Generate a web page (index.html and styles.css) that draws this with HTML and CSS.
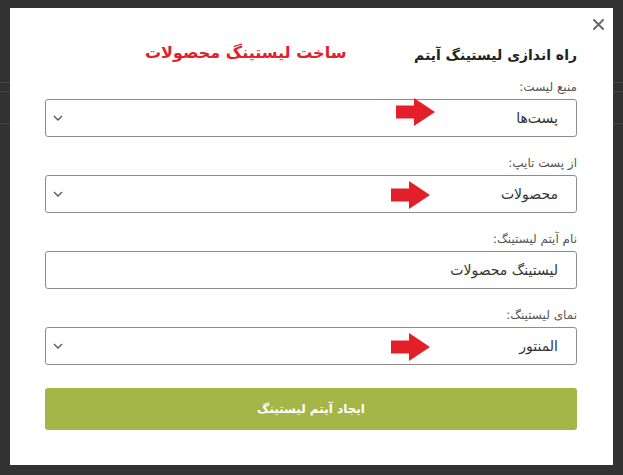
FILE: index.html
```html
<!DOCTYPE html>
<html lang="fa">
<head>
<meta charset="utf-8">
<title>راه اندازی لیستینگ آیتم</title>
<link rel="stylesheet" href="styles.css">
</head>
<body>
<div class="backdrop">
  <div class="modal" dir="rtl">
    <button class="close" aria-label="بستن">
      <svg width="11" height="11" viewBox="0 0 11 11"><path d="M1 1L10 10M10 1L1 10" stroke="#6b6b6b" stroke-width="2" stroke-linecap="round"/></svg>
    </button>
    <h2 class="title">راه اندازی لیستینگ آیتم</h2>
    <div class="note">ساخت لیستینگ محصولات</div>

    <div class="field">
      <label class="label">منبع لیست:</label>
      <div class="control select">
        <span class="value">پست‌ها</span>
        <svg class="chev" width="10" height="6" viewBox="0 0 10 6"><path d="M1 1L5 5L9 1" fill="none" stroke="#555" stroke-width="1.3"/></svg>
        <svg class="pointer p1" width="39" height="28" viewBox="0 0 39 28"><polygon points="0,7.5 18,7.5 18,0 39,14 18,28 18,20.5 0,20.5" fill="#e3202a"/></svg>
      </div>
    </div>

    <div class="field">
      <label class="label">از پست تایپ:</label>
      <div class="control select">
        <span class="value">محصولات</span>
        <svg class="chev" width="10" height="6" viewBox="0 0 10 6"><path d="M1 1L5 5L9 1" fill="none" stroke="#555" stroke-width="1.3"/></svg>
        <svg class="pointer p2" width="39" height="28" viewBox="0 0 39 28"><polygon points="0,7.5 18,7.5 18,0 39,14 18,28 18,20.5 0,20.5" fill="#e3202a"/></svg>
      </div>
    </div>

    <div class="field">
      <label class="label">نام آیتم لیستینگ:</label>
      <div class="control">
        <span class="value">لیستینگ محصولات</span>
      </div>
    </div>

    <div class="field">
      <label class="label">نمای لیستینگ:</label>
      <div class="control select">
        <span class="value">المنتور</span>
        <svg class="chev" width="10" height="6" viewBox="0 0 10 6"><path d="M1 1L5 5L9 1" fill="none" stroke="#555" stroke-width="1.3"/></svg>
        <svg class="pointer p3" width="39" height="28" viewBox="0 0 39 28"><polygon points="0,7.5 18,7.5 18,0 39,14 18,28 18,20.5 0,20.5" fill="#e3202a"/></svg>
      </div>
    </div>

    <button class="submit">ایجاد آیتم لیستینگ</button>
  </div>
</div>
</body>
</html>
```

FILE: styles.css
```css
html, body {
  margin: 0;
  padding: 0;
}
body {
  width: 623px;
  height: 475px;
  overflow: hidden;
  background-color: #323232;
  background-image:
    linear-gradient(#474747, #474747),
    linear-gradient(#474747, #474747),
    linear-gradient(#474747, #474747);
  background-size: 100% 1px, 100% 1px, 100% 1px;
  background-position: 0 82px, 0 91px, 0 123px;
  background-repeat: no-repeat;
  font-family: "DejaVu Sans", "Noto Sans", sans-serif;
}
.backdrop {
  padding: 8px 0 0 10px;
}
.modal {
  position: relative;
  box-sizing: border-box;
  width: 603px;
  height: 457px;
  background: #ffffff;
  padding: 35px 36px 0 35px;
}
.close {
  position: absolute;
  top: 11px;
  right: 9px;
  border: 0;
  background: none;
  padding: 0;
  width: 11px;
  height: 11px;
  display: flex;
}
.title {
  margin: 0 0 11px;
  font-size: 14px;
  line-height: 24px;
  font-weight: bold;
  color: #222;
}
.note {
  position: absolute;
  left: 135px;
  top: 33px;
  font-size: 16px;
  line-height: 24px;
  font-weight: bold;
  color: #e3202a;
}
.field {
  margin-bottom: 17px;
}
.label {
  display: block;
  font-size: 12px;
  line-height: 18px;
  color: #555;
  margin-bottom: 3px;
}
.control {
  position: relative;
  box-sizing: border-box;
  height: 38px;
  border: 1px solid #8d8d8d;
  border-radius: 3px;
  display: flex;
  align-items: center;
  padding: 0 18px 0 7px;
}
.value {
  flex: 1;
  font-size: 14px;
  color: #333;
}
.chev {
  flex: none;
  margin-left: 0;
}
.pointer {
  position: absolute;
  right: 141px;
}
.p1 { top: -2px; }
.p2 { top: 5px; }
.p3 { top: 5px; }
.p2, .p3 { right: 146px; }
.submit {
  display: block;
  width: 100%;
  height: 42px;
  margin-top: 23px;
  border: 0;
  border-radius: 3px;
  background: #a4b746;
  color: #fff;
  font-family: "DejaVu Sans", sans-serif;
  font-size: 12px;
  font-weight: bold;
}
```
